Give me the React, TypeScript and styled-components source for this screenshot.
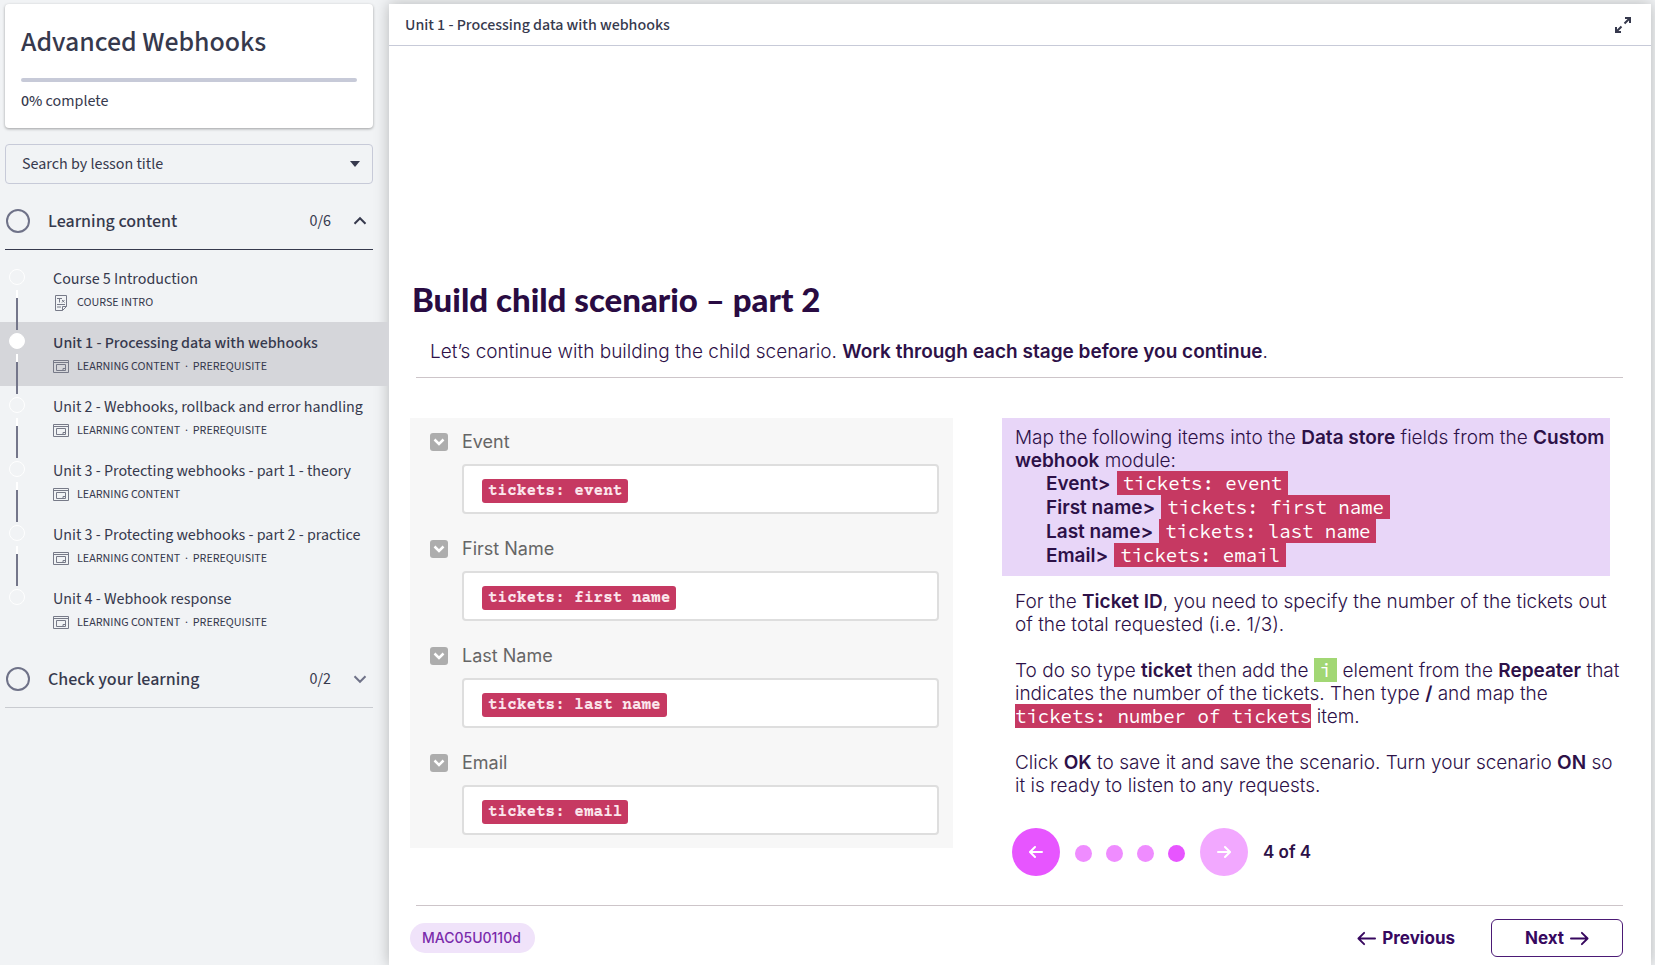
import React from "react";
import styled, { createGlobalStyle, css } from "styled-components";

const sourceSans = `"Source Sans 3", "Source Sans Pro", "Noto Sans CJK SC", sans-serif`;
const inter = `Inter, "Liberation Sans", sans-serif`;
const codeFont = `"Source Code Pro", "DejaVu Sans Mono", monospace`;

const GlobalStyle = createGlobalStyle`
  *, *::before, *::after { box-sizing: border-box; }
  body { margin: 0; background: #f1f3f5; color: #36394d; font-family: ${sourceSans}; }
  button { font: inherit; color: inherit; background: none; border: 0; padding: 0; cursor: pointer; }
  h1, h2, h3, p, ul { margin: 0; padding: 0; }
  ul { list-style: none; }
  a { color: inherit; text-decoration: none; }
`;

const Page = styled.div`
  display: flex;
  min-height: 100vh;
`;

const Sidebar = styled.aside`
  flex: 0 0 389px;
  padding-top: 4px;
`;

const CourseCard = styled.section`
  margin: 0 16px 16px 5px;
  padding: 20px 16px 16px;
  height: 124px;
  background: #fff;
  border-radius: 4px;
  box-shadow: 0 1px 3px rgba(0, 0, 0, 0.35);
`;

const CourseTitle = styled.h1`
  font-size: 28px;
  line-height: 36px;
  font-weight: 500;
`;

const ProgressBar = styled.div`
  height: 4px;
  margin-top: 18px;
  border-radius: 2px;
  background: #c7cad8;
`;

const ProgressText = styled.p`
  margin-top: 7px;
  font-size: 16px;
  line-height: 24px;

  strong { font-weight: 500; }
`;

const SearchBox = styled.div`
  position: relative;
  margin: 0 16px 9px 5px;
`;

const SearchSelect = styled.select`
  display: block;
  width: 100%;
  height: 40px;
  padding: 0 40px 0 16px;
  appearance: none;
  border: 1px solid #c7cad8;
  border-radius: 4px;
  background: transparent;
  color: #36394d;
  font-family: ${sourceSans};
  font-size: 16px;
`;

const SelectArrow = styled.svg`
  position: absolute;
  right: 13px;
  top: 17px;
  pointer-events: none;
`;

const SectionToggle = styled.button<{ $open?: boolean }>`
  display: flex;
  align-items: center;
  width: calc(100% - 21px);
  height: 57px;
  margin-left: 5px;
  padding: 0 6px 0 1px;
  border-bottom: 1px solid ${(p) => (p.$open ? "#36394d" : "#c9cbd0")};
  text-align: left;
`;

const StatusRing = styled.span`
  width: 24px;
  height: 24px;
  margin-right: 18px;
  border: 2px solid #6f7288;
  border-radius: 50%;
`;

const SectionName = styled.span`
  flex: 1;
  font-size: 18px;
  font-weight: 500;
`;

const SectionCount = styled.span`
  margin-right: 22px;
  font-size: 16px;
`;

const LessonList = styled.ul`
  padding: 8px 0 9px;
`;

const Lesson = styled.li<{ $active?: boolean }>`
  position: relative;
  height: 64px;
  background: ${(p) => (p.$active ? "#d5d6da" : "transparent")};
`;

const LessonLink = styled.a`
  display: block;
  height: 100%;
  padding: 10px 0 0 53px;
`;

const LessonDot = styled.span<{ $active?: boolean }>`
  position: absolute;
  left: 9px;
  top: 11px;
  width: 16px;
  height: 16px;
  border: 1px solid #fff;
  border-radius: 50%;
  background: ${(p) => (p.$active ? "#fff" : "transparent")};
`;

const Connector = styled.span`
  position: absolute;
  z-index: 1;
  left: 16px;
  top: 32px;
  width: 2px;
  height: 40px;
  background: linear-gradient(#fff 8px, #74768a 8px);
`;

const LessonName = styled.span<{ $active?: boolean }>`
  display: block;
  font-size: 16px;
  line-height: 22px;
  font-weight: ${(p) => (p.$active ? 500 : 400)};
  white-space: nowrap;
`;

const LessonMeta = styled.span`
  display: flex;
  align-items: center;
  gap: 8px;
  margin-top: 4px;
  font-size: 12px;
  line-height: 18px;
  white-space: pre;
`;

const Main = styled.main`
  display: flex;
  flex-direction: column;
  flex: 1;
  min-width: 0;
  margin: 4px 4px 0 0;
  background: #fff;
  box-shadow: 0 0 14px rgba(0, 0, 0, 0.25);
`;

const TopBar = styled.header`
  display: flex;
  align-items: center;
  justify-content: space-between;
  height: 42px;
  padding: 0 20px 0 16px;
  border-bottom: 1px solid #c7cad8;
`;

const TopTitle = styled.h2`
  font-size: 16px;
  line-height: 24px;
  font-weight: 500;
`;

const IconButton = styled.button`
  display: flex;
`;

const Slide = styled.article`
  display: flex;
  flex-direction: column;
  flex: 1;
  padding: 233px 28px 8px 21px;
  color: #2d1148;
  font-family: ${inter};
`;

const SlideTitle = styled.h2`
  padding-left: 2px;
  color: #290b42;
  font-family: Lato, sans-serif;
  font-size: 33px;
  line-height: 40px;
  font-weight: 900;
`;

const Intro = styled.p`
  padding: 21px 0 13px 20px;
  font-size: 19px;
  line-height: 24px;
  font-weight: 300;
`;

const Rule = styled.hr`
  width: calc(100% - 6px);
  height: 1px;
  margin: 0 0 0 6px;
  border: 0;
  background: #cdc5c9;
`;

const Columns = styled.div`
  display: grid;
  grid-template-columns: minmax(0, 543fr) minmax(0, 621fr);
  gap: 49px;
  align-items: start;
  padding: 40px 0 29px;
`;

const FieldsPanel = styled.div`
  display: flex;
  flex-direction: column;
  gap: 22px;
  padding: 11px 14px 13px 20px;
  background: #f7f7f7;
`;

const Field = styled.div`
  display: grid;
  grid-template-columns: 18px 1fr;
  column-gap: 14px;
  row-gap: 9px;
  align-items: center;
`;

const CollapseButton = styled.button`
  display: flex;
  align-items: center;
  justify-content: center;
  width: 18px;
  height: 18px;
  border-radius: 3px;
  background: #adadad;
`;

const FieldLabel = styled.label`
  color: #666;
  font-family: ${inter};
  font-size: 18px;
  line-height: 26px;
`;

const FieldBox = styled.div`
  display: flex;
  align-items: center;
  grid-column: 2;
  height: 50px;
  padding: 4px 18px 0;
  border: 2px solid #dedede;
  border-radius: 4px;
  background: #fff;
`;

const FieldValue = styled.input<{ $chars: number }>`
  width: calc(${(p) => p.$chars}ch + 12px);
  height: 24px;
  padding: 0 6px;
  border: 0;
  border-radius: 3px;
  background: #c63962;
  color: #fbe6ec;
  font-family: "Courier Prime", "Liberation Mono", monospace;
  font-size: 16px;
  font-weight: 700;
`;

const bodyText = css`
  font-size: 19px;
  line-height: 23px;
  font-weight: 300;
  white-space: nowrap;
`;

const Callout = styled.div`
  ${bodyText}
  margin-right: 13px;
  padding: 8px 0 8px 13px;
  background: #e8d6f8;
`;

const MapList = styled.ul`
  padding-left: 31px;
  font-weight: 600;
`;

const MapItem = styled.li`
  display: flex;
  align-items: flex-start;
  gap: 6px;
  height: 24px;
`;

const Token = styled.code<{ $tight?: boolean; $green?: boolean }>`
  display: inline-block;
  height: 24px;
  margin-top: -1px;
  padding: 0 ${(p) => (p.$tight ? 0 : 6)}px;
  background: ${(p) => (p.$green ? "#a2d774" : "#c63962")};
  color: #fff;
  font-family: ${codeFont};
  font-size: 19px;
  line-height: 24px;
  font-weight: 400;
  vertical-align: bottom;
`;

const Notes = styled.div`
  ${bodyText}
  display: flex;
  flex-direction: column;
  gap: 23px;
  padding: 14px 0 31px 13px;
`;

const Strong = styled.strong`
  font-weight: 600;
`;

const Stepper = styled.nav`
  display: flex;
  align-items: center;
  gap: 15px;
  padding-left: 10px;
`;

const StepButton = styled.button<{ $muted?: boolean }>`
  display: flex;
  align-items: center;
  justify-content: center;
  width: 48px;
  height: 48px;
  border-radius: 50%;
  background: ${(p) => (p.$muted ? "#f2a8ff" : "#e755ff")};
`;

const Dots = styled.div`
  display: flex;
  gap: 14px;
  margin-top: 2px;
`;

const StepDot = styled.button<{ $current?: boolean }>`
  width: 17px;
  height: 17px;
  border-radius: 50%;
  background: ${(p) => (p.$current ? "#e755ff" : "#ef8cff")};
`;

const StepCount = styled.span`
  font-size: 17px;
  font-weight: 600;
`;

const Footer = styled.footer`
  display: flex;
  align-items: center;
  padding-top: 13px;
`;

const CodeBadge = styled.span`
  padding: 0 14px 0 12px;
  border-radius: 15px;
  background: #f0e3fa;
  color: #7a2bab;
  font-size: 14px;
  line-height: 30px;
  font-weight: 500;
`;

const FooterButton = styled.button<{ $outlined?: boolean }>`
  display: flex;
  align-items: center;
  justify-content: center;
  gap: 6px;
  height: 38px;
  color: #37085f;
  font-size: 17px;
  font-weight: 700;
  ${(p) =>
    p.$outlined
      ? css`
          width: 132px;
          margin-left: 36px;
          border: 1px solid #4b1a75;
          border-radius: 6px;
        `
      : css`
          margin-left: auto;
        `}
`;

const Chevron = ({ up }: { up?: boolean }) => (
  <svg width="14" height="14" viewBox="0 0 14 14" fill="none" stroke={up ? "#36394d" : "#6f7288"} strokeWidth="2">
    <path d={up ? "M1.500 9.700 7 4.200l5.500 5.500" : "M1.500 4.300 7 9.800l5.500-5.500"} />
  </svg>
);

const Arrow = ({ left }: { left?: boolean }) => (
  <svg width="19" height="19" viewBox="0 0 20 20" fill="none" stroke="currentColor" strokeWidth="2" strokeLinecap="round" strokeLinejoin="round">
    <path d={left ? "M19 10H1.500M7.500 4 1.500 10l6 6" : "M1 10h17.500M12.500 4l6 6-6 6"} />
  </svg>
);

const ExpandIcon = () => (
  <svg width="16" height="16" viewBox="0 0 16 16" fill="none" stroke="#36394d" strokeWidth="2">
    <path d="M9.500 6.500 14.500 1.500M10 1h5v5M6.500 9.500l-5 5M1 10v5h5" />
  </svg>
);

const TextIcon = () => (
  <svg width="16" height="16" viewBox="0 0 16 16" fill="none" stroke="#777a88">
    <path d="M2.500.5h11v11l-4 4h-7zM13.500 11.500h-4v4M4 3.500h5M6.500 3.500v4M9 5l2.500 2.500M11.500 5 9 7.500M4 9.500h8M4 12h4" />
  </svg>
);

const WindowIcon = () => (
  <svg width="16" height="16" viewBox="0 0 16 16" fill="none" stroke="#777a88">
    <path d="M.5 1.500h15v12H.5zM.5 3.500h15M3.500 5.500h9v6h-9zM12.500 9.500h-2.500v2" />
  </svg>
);

const lessons = [
  { name: "Course 5 Introduction", meta: "COURSE INTRO", text: true },
  { name: "Unit 1 - Processing data with webhooks", meta: "LEARNING CONTENT  ·  PREREQUISITE", active: true },
  { name: "Unit 2 - Webhooks, rollback and error handling", meta: "LEARNING CONTENT  ·  PREREQUISITE" },
  { name: "Unit 3 - Protecting webhooks - part 1 - theory", meta: "LEARNING CONTENT" },
  { name: "Unit 3 - Protecting webhooks - part 2 - practice", meta: "LEARNING CONTENT  ·  PREREQUISITE" },
  { name: "Unit 4 - Webhook response", meta: "LEARNING CONTENT  ·  PREREQUISITE" },
];

const fields = [
  { label: "Event", value: "tickets: event" },
  { label: "First Name", value: "tickets: first name" },
  { label: "Last Name", value: "tickets: last name" },
  { label: "Email", value: "tickets: email" },
];

const mappings = [
  ["Event>", "tickets: event"],
  ["First name>", "tickets: first name"],
  ["Last name>", "tickets: last name"],
  ["Email>", "tickets: email"],
];

export default function App() {
  return (
    <>
      <GlobalStyle />
      <Page>
        <Sidebar>
          <CourseCard>
            <CourseTitle>Advanced Webhooks</CourseTitle>
            <ProgressBar role="progressbar" aria-label="Course progress" aria-valuenow={0} />
            <ProgressText>
              <strong>0%</strong> complete
            </ProgressText>
          </CourseCard>
          <SearchBox>
            <SearchSelect aria-label="Search by lesson title">
              <option>Search by lesson title</option>
            </SearchSelect>
            <SelectArrow width="10" height="6" viewBox="0 0 10 6">
              <path d="M0 0h10L5 6z" fill="#36394d" />
            </SelectArrow>
          </SearchBox>
          <SectionToggle $open aria-expanded="true">
            <StatusRing />
            <SectionName>Learning content</SectionName>
            <SectionCount>0/6</SectionCount>
            <Chevron up />
          </SectionToggle>
          <LessonList>
            {lessons.map((lesson, i) => (
              <Lesson key={lesson.name} $active={lesson.active}>
                <LessonDot $active={lesson.active} />
                {i < lessons.length - 1 && <Connector />}
                <LessonLink href="#">
                  <LessonName $active={lesson.active}>{lesson.name}</LessonName>
                  <LessonMeta>
                    {lesson.text ? <TextIcon /> : <WindowIcon />}
                    {lesson.meta}
                  </LessonMeta>
                </LessonLink>
              </Lesson>
            ))}
          </LessonList>
          <SectionToggle aria-expanded="false">
            <StatusRing />
            <SectionName>Check your learning</SectionName>
            <SectionCount>0/2</SectionCount>
            <Chevron />
          </SectionToggle>
        </Sidebar>
        <Main>
          <TopBar>
            <TopTitle>Unit 1 - Processing data with webhooks</TopTitle>
            <IconButton aria-label="Full screen">
              <ExpandIcon />
            </IconButton>
          </TopBar>
          <Slide>
            <SlideTitle>Build child scenario – part 2</SlideTitle>
            <Intro>
              Let’s continue with building the child scenario. <Strong>Work through each stage before you continue</Strong>.
            </Intro>
            <Rule />
            <Columns>
              <FieldsPanel>
                {fields.map((f, i) => (
                  <Field key={f.label}>
                    <CollapseButton aria-label={`Collapse ${f.label}`}>
                      <svg width="12" height="8" viewBox="0 0 12 8" fill="none" stroke="#fff" strokeWidth="2.500">
                        <path d="M1.500 1.500 6 6l4.500-4.500" />
                      </svg>
                    </CollapseButton>
                    <FieldLabel htmlFor={`field-${i}`}>{f.label}</FieldLabel>
                    <FieldBox>
                      <FieldValue id={`field-${i}`} $chars={f.value.length} defaultValue={f.value} />
                    </FieldBox>
                  </Field>
                ))}
              </FieldsPanel>
              <div>
                <Callout>
                  <p>
                    Map the following items into the <Strong>Data store</Strong> fields from the <Strong>Custom</Strong>
                    <br />
                    <Strong>webhook</Strong> module:
                  </p>
                  <MapList>
                    {mappings.map(([name, token]) => (
                      <MapItem key={name}>
                        {name}
                        <Token>{token}</Token>
                      </MapItem>
                    ))}
                  </MapList>
                </Callout>
                <Notes>
                  <p>
                    For the <Strong>Ticket ID</Strong>, you need to specify the number of the tickets out
                    <br />
                    of the total requested (i.e. 1/3).
                  </p>
                  <p>
                    To do so type <Strong>ticket</Strong> then add the <Token $green>i</Token> element from the{" "}
                    <Strong>Repeater</Strong> that
                    <br />
                    indicates the number of the tickets. Then type <Strong>/</Strong> and map the
                    <br />
                    <Token $tight>tickets: number of tickets</Token> item.
                  </p>
                  <p>
                    Click <Strong>OK</Strong> to save it and save the scenario. Turn your scenario <Strong>ON</Strong> so
                    <br />
                    it is ready to listen to any requests.
                  </p>
                </Notes>
                <Stepper aria-label="Slide steps">
                  <StepButton aria-label="Previous step">
                    <svg width="14" height="14" viewBox="0 0 14 14" fill="none" stroke="#fff" strokeWidth="2" strokeLinecap="round">
                      <path d="M13 7H1.500M6 2 1 7l5 5" />
                    </svg>
                  </StepButton>
                  <Dots>
                    {[1, 2, 3, 4].map((n) => (
                      <StepDot key={n} $current={n === 4} aria-label={`Step ${n}`} />
                    ))}
                  </Dots>
                  <StepButton $muted aria-label="Next step">
                    <svg width="14" height="14" viewBox="0 0 14 14" fill="none" stroke="#fff" strokeWidth="2" strokeLinecap="round">
                      <path d="M1 7h11.500M8 2l5 5-5 5" />
                    </svg>
                  </StepButton>
                  <StepCount>4 of 4</StepCount>
                </Stepper>
              </div>
            </Columns>
            <Rule />
            <Footer>
              <CodeBadge>MAC05U0110d</CodeBadge>
              <FooterButton>
                <Arrow left />
                Previous
              </FooterButton>
              <FooterButton $outlined>
                Next
                <Arrow />
              </FooterButton>
            </Footer>
          </Slide>
        </Main>
      </Page>
    </>
  );
}
